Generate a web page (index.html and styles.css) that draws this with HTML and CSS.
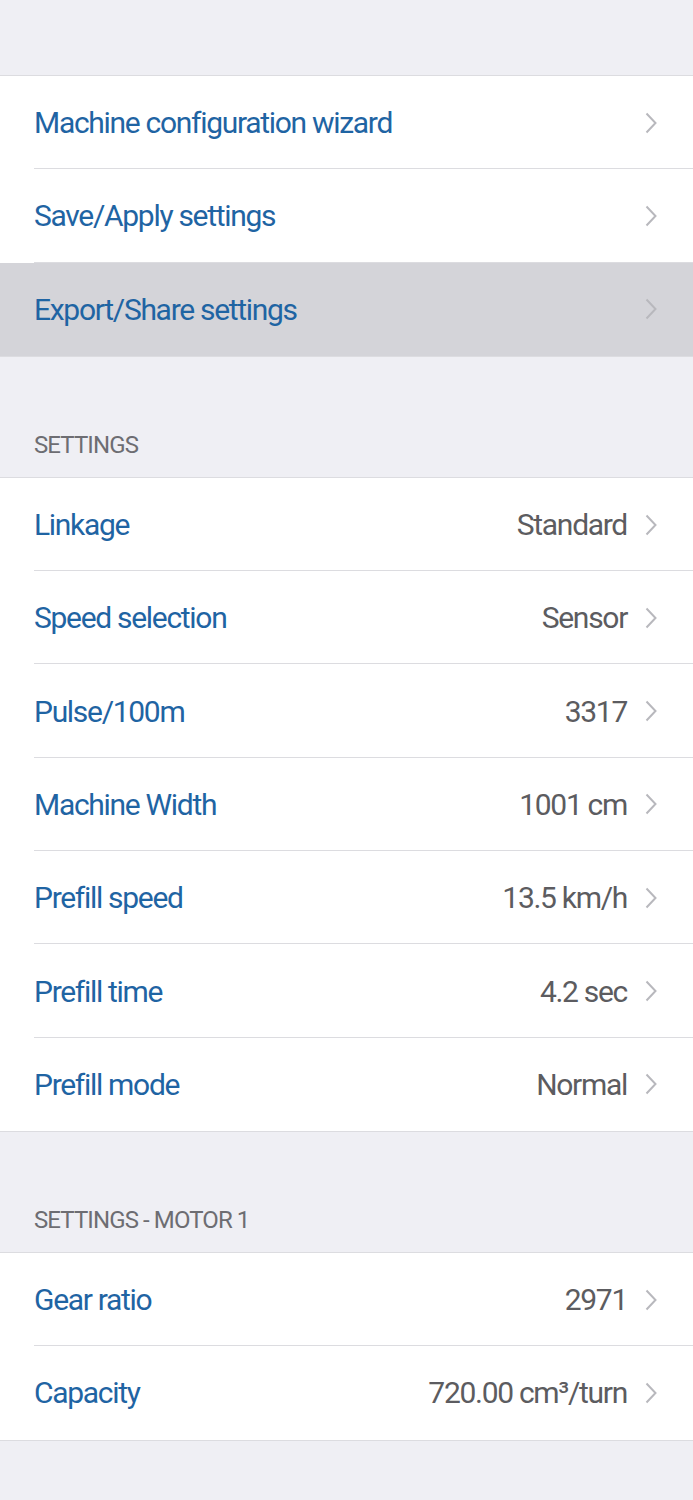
FILE: index.html
```html
<!DOCTYPE html>
<html lang="en">
<head>
    <meta charset="UTF-8">
    <meta name="viewport" content="width=device-width, initial-scale=1.0">
    <title>Settings</title>
    <link rel="stylesheet" href="styles.css">
</head>
<body>
    <div class="spacer-top"></div>

    <ul class="group">
        <li class="row"><span class="label">Machine configuration wizard</span><span class="chev"></span></li>
        <li class="row"><span class="label">Save/Apply settings</span><span class="chev"></span></li>
        <li class="row active"><span class="label">Export/Share settings</span><span class="chev"></span></li>
    </ul>

    <div class="section-head">SETTINGS</div>
    <ul class="group">
        <li class="row"><span class="label">Linkage</span><span class="value">Standard</span><span class="chev"></span></li>
        <li class="row"><span class="label">Speed selection</span><span class="value">Sensor</span><span class="chev"></span></li>
        <li class="row"><span class="label">Pulse/100m</span><span class="value">3317</span><span class="chev"></span></li>
        <li class="row"><span class="label">Machine Width</span><span class="value">1001 cm</span><span class="chev"></span></li>
        <li class="row"><span class="label">Prefill speed</span><span class="value">13.5 km/h</span><span class="chev"></span></li>
        <li class="row"><span class="label">Prefill time</span><span class="value">4.2 sec</span><span class="chev"></span></li>
        <li class="row"><span class="label">Prefill mode</span><span class="value">Normal</span><span class="chev"></span></li>
    </ul>

    <div class="section-head">SETTINGS - MOTOR 1</div>
    <ul class="group">
        <li class="row"><span class="label">Gear ratio</span><span class="value">2971</span><span class="chev"></span></li>
        <li class="row"><span class="label">Capacity</span><span class="value">720.00 cm³/turn</span><span class="chev"></span></li>
    </ul>
</body>
</html>
```

FILE: styles.css
```css
body {
    margin: 0;
    background: #efeff4;
    font-family: Roboto, "Liberation Sans", sans-serif;
    height: 1500px;
    overflow: hidden;
}
.spacer-top {
    height: 75px;
}
.group {
    list-style: none;
    margin: 0;
    padding: 0;
    background: #fff;
    border-top: 1px solid #dcdce0;
    border-bottom: 1px solid #dcdce0;
}
.row {
    height: 93.3px;
    display: flex;
    align-items: center;
    padding: 0 36px 0 34px;
    position: relative;
    box-sizing: border-box;
}
.row + .row::before {
    content: "";
    position: absolute;
    top: -1px;
    left: 34px;
    right: 0;
    height: 1px;
    background: #dcdce0;
}
.row.active {
    background: #d4d4d9;
}
.label {
    flex: 1;
    color: #1f64a3;
    font-size: 30px;
    letter-spacing: -1.3px;
}
.value {
    color: #5c5c60;
    font-size: 30px;
    letter-spacing: -1.3px;
    margin-right: 18px;
}
.chev {
    width: 12px;
    height: 22px;
    background: no-repeat center/12px 22px url("data:image/svg+xml;utf8,<svg xmlns='http://www.w3.org/2000/svg' viewBox='0 0 12 22'><path d='M1.5 1.5 L10.5 11 L1.5 20.5' fill='none' stroke='%23b8b8bd' stroke-width='2'/></svg>");
}
.section-head {
    height: 120px;
    box-sizing: border-box;
    padding: 0 34px 18px;
    display: flex;
    align-items: flex-end;
    color: #6d6d72;
    font-size: 24px;
    letter-spacing: -0.9px;
}
```
